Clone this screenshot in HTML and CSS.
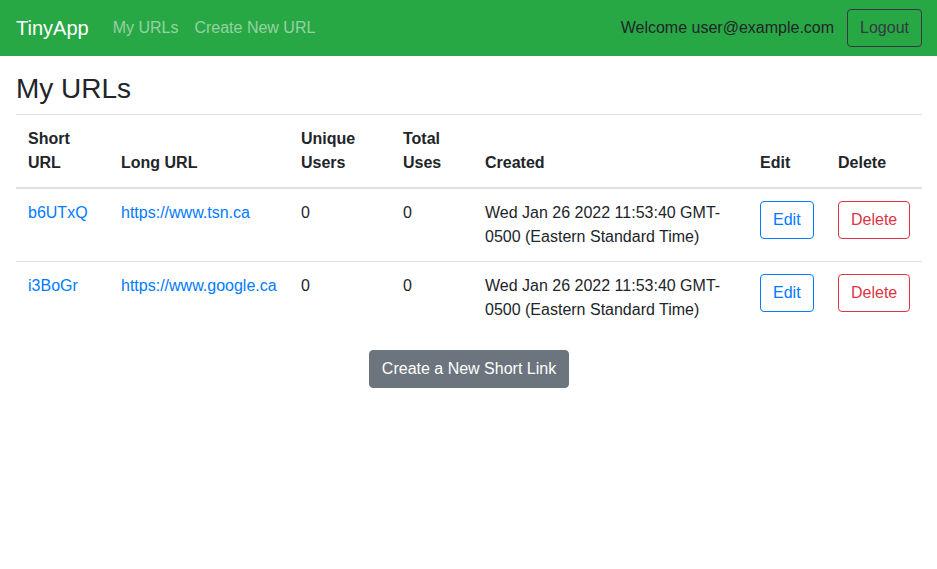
FILE: index.html
```html
<!DOCTYPE html>
<html lang="en">
<head>
<meta charset="utf-8">
<title>TinyApp</title>
<link rel="stylesheet" href="styles.css">
</head>
<body>
<nav class="navbar">
  <a class="brand" href="#">TinyApp</a>
  <div class="nav-links">
    <a class="nav-link" href="#">My URLs</a>
    <a class="nav-link" href="#">Create New URL</a>
  </div>
  <div class="nav-right">
    <span class="welcome">Welcome user@example.com</span>
    <button class="btn btn-outline-dark">Logout</button>
  </div>
</nav>
<main class="content">
  <h3 class="title">My URLs</h3>
  <table class="table">
    <thead>
      <tr>
        <th class="c-short">Short URL</th>
        <th class="c-long">Long URL</th>
        <th class="c-unique">Unique Users</th>
        <th class="c-total">Total Uses</th>
        <th class="c-created">Created</th>
        <th class="c-edit">Edit</th>
        <th class="c-delete">Delete</th>
      </tr>
    </thead>
    <tbody>
      <tr>
        <td><a href="#">b6UTxQ</a></td>
        <td><a href="#">https://www.tsn.ca</a></td>
        <td>0</td>
        <td>0</td>
        <td>Wed Jan 26 2022 11:53:40 GMT-0500 (Eastern Standard Time)</td>
        <td><button class="btn btn-outline-primary">Edit</button></td>
        <td><button class="btn btn-outline-danger">Delete</button></td>
      </tr>
      <tr>
        <td><a href="#">i3BoGr</a></td>
        <td><a href="#">https://www.google.ca</a></td>
        <td>0</td>
        <td>0</td>
        <td>Wed Jan 26 2022 11:53:40 GMT-0500 (Eastern Standard Time)</td>
        <td><button class="btn btn-outline-primary">Edit</button></td>
        <td><button class="btn btn-outline-danger">Delete</button></td>
      </tr>
    </tbody>
  </table>
  <div class="center">
    <button class="btn btn-secondary">Create a New Short Link</button>
  </div>
</main>
</body>
</html>
```

FILE: styles.css
```css
* { box-sizing: border-box; }
html, body {
  margin: 0;
  padding: 0;
  background: #fff;
  font-family: "Liberation Sans", Arial, sans-serif;
  font-size: 16px;
  line-height: 1.5;
  color: #212529;
}
a { color: #007bff; text-decoration: none; }

.navbar {
  display: flex;
  align-items: center;
  height: 56px;
  padding: 8px 15px 8px 16px;
  background: #28a745;
}
.brand {
  color: #fff;
  font-size: 20px;
  line-height: 30px;
  padding: 5px 0;
  margin-right: 16px;
}
.nav-links { display: flex; }
.nav-link {
  color: rgba(255, 255, 255, 0.5);
  padding: 8px;
}
.nav-right {
  margin-left: auto;
  display: flex;
  align-items: center;
  gap: 13px;
}
.welcome { color: #212529; }

.btn {
  font-family: inherit;
  font-size: 16px;
  line-height: 24px;
  padding: 6px 12px;
  border: 1px solid transparent;
  border-radius: 4px;
  background: transparent;
  cursor: pointer;
}
.btn-outline-dark { color: #343a40; border-color: #343a40; }
.btn-outline-primary { color: #007bff; border-color: #007bff; }
.btn-outline-danger { color: #dc3545; border-color: #dc3545; }
.btn-secondary { color: #fff; background: #6c757d; border-color: #6c757d; }

.content { padding: 16px 15px 0 16px; }
.title {
  margin: 0 0 8px;
  font-size: 28px;
  font-weight: 500;
  line-height: 1.2;
}
.table {
  width: 100%;
  border-collapse: collapse;
  table-layout: fixed;
  margin-bottom: 16px;
}
.table th, .table td {
  padding: 12px;
  text-align: left;
  vertical-align: top;
  border-top: 1px solid #dee2e6;
}
.table thead th {
  vertical-align: bottom;
  border-bottom: 2px solid #dee2e6;
  font-weight: 700;
}
.table tbody tr:first-child td { border-top: 0; }
.c-short { width: 93px; }
.c-long { width: 180px; }
.c-unique { width: 102px; }
.c-total { width: 82px; }
.c-created { width: 275px; }
.c-edit { width: 78px; }
.c-delete { width: 96px; }
.center { display: flex; justify-content: center; }
```
